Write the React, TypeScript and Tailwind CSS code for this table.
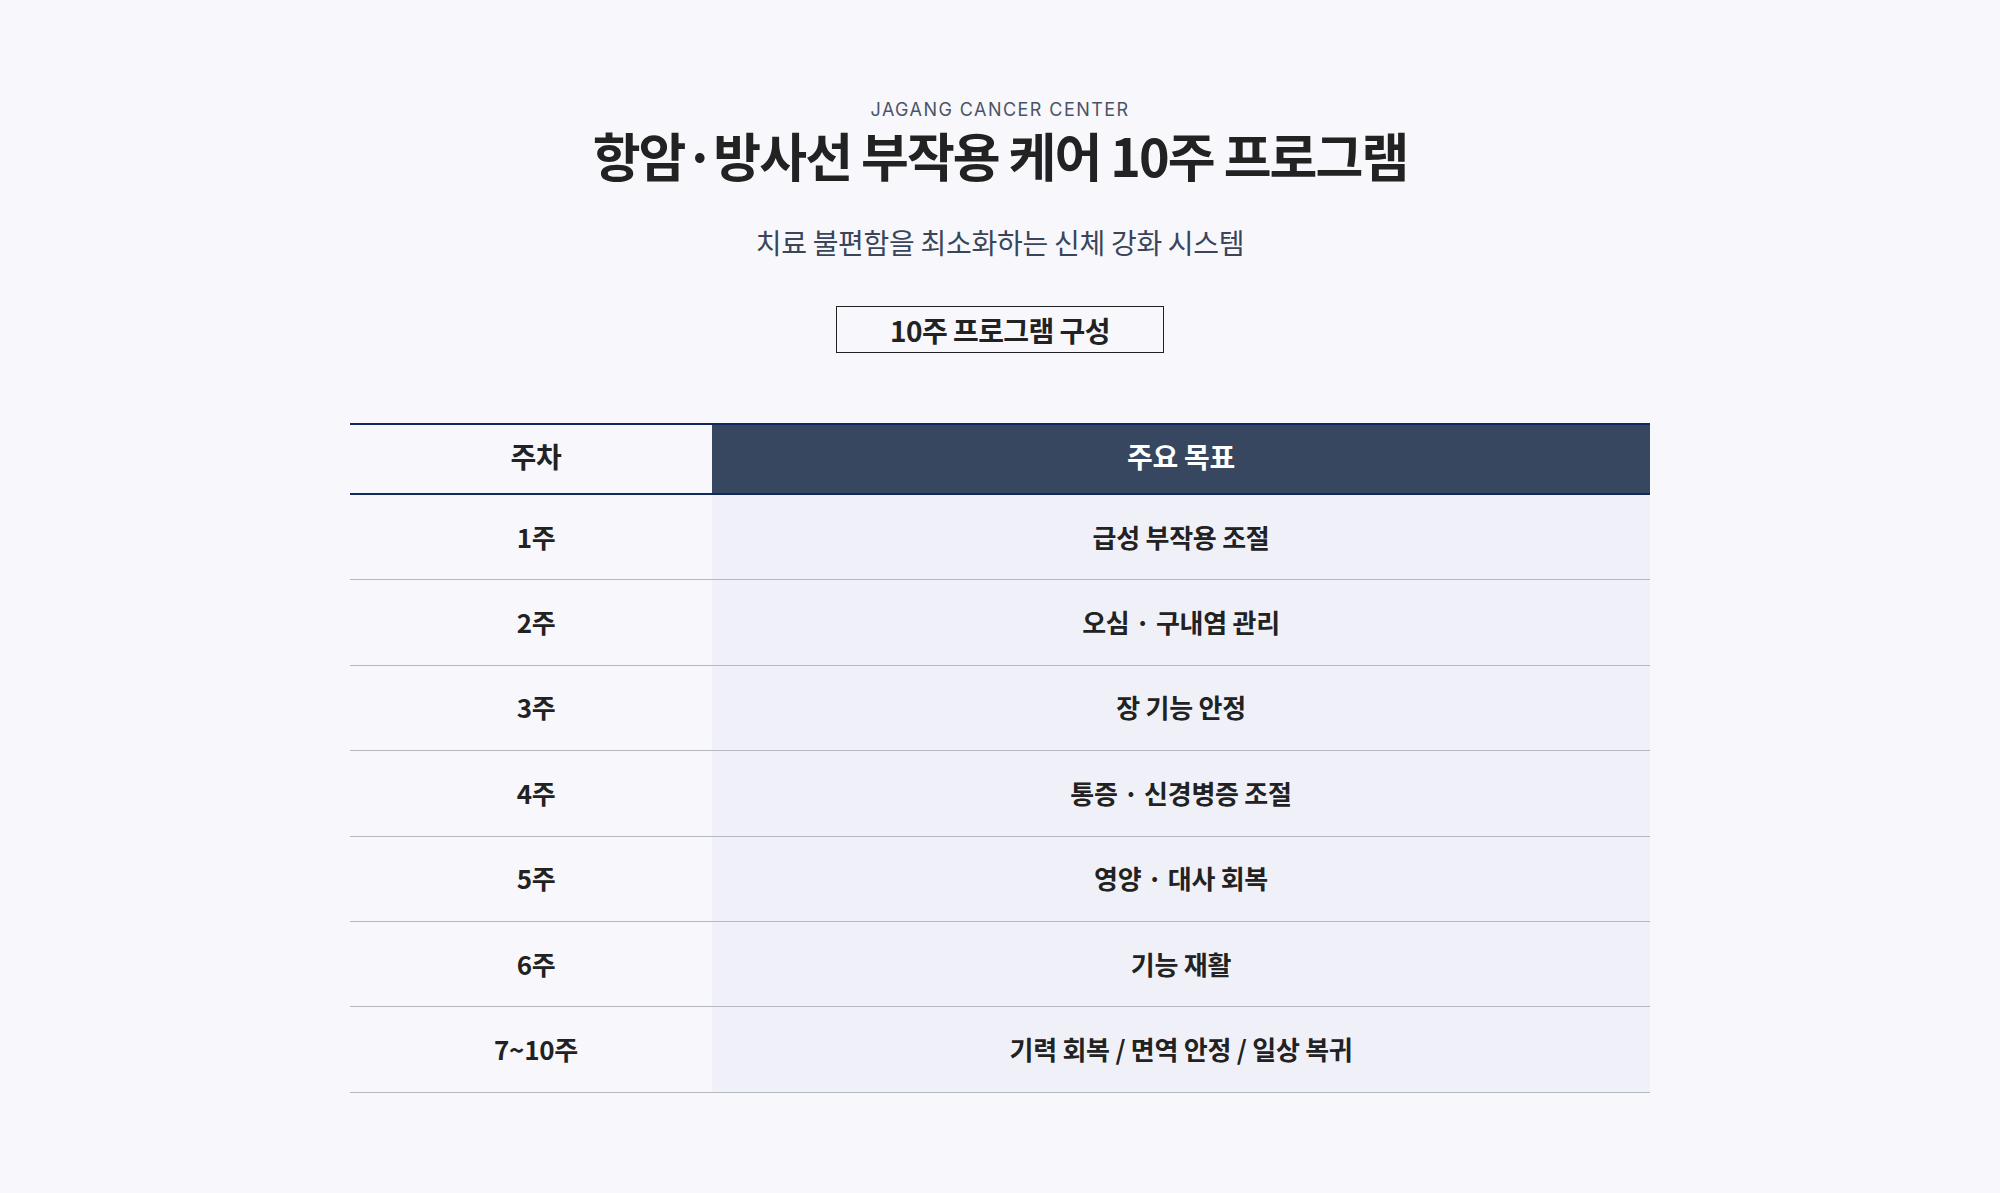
import React from "react";

const rows: { week: string; goal: string }[] = [
  { week: "1주", goal: "급성 부작용 조절" },
  { week: "2주", goal: "오심 · 구내염 관리" },
  { week: "3주", goal: "장 기능 안정" },
  { week: "4주", goal: "통증 · 신경병증 조절" },
  { week: "5주", goal: "영양 · 대사 회복" },
  { week: "6주", goal: "기능 재활" },
  { week: "7~10주", goal: "기력 회복 / 면역 안정 / 일상 복귀" },
];

const font = "font-['Noto_Sans_CJK_KR','Noto_Sans',sans-serif]";

export default function App() {
  return (
    <div className={`min-h-[1193px] w-full bg-[#f8f8fc] text-[#222] ${font}`}>
      <div className="mx-auto flex w-[1300px] flex-col items-center pt-[99px]">
        {/* heading */}
        <p className="text-[18px] leading-[22px] tracking-[0.08em] text-[#4a5366] font-['Inter','Noto_Sans',sans-serif]">
          JAGANG CANCER CENTER
        </p>
        <h1 className="mt-[3px] text-[52px] font-bold leading-[62px] tracking-[-0.037em] text-[#222]">
          항암·방사선 부작용 케어 10주 프로그램
        </h1>
        <p className="mt-[39px] text-[28px] font-normal leading-[34px] tracking-[-0.01em] text-[#3a4559]">
          치료 불편함을 최소화하는 신체 강화 시스템
        </p>

        <div className="mt-[47px] flex h-[47px] w-[328px] items-center justify-center border border-[#222]">
          <span className="text-[28px] font-bold tracking-[-0.02em] text-[#222]">10주 프로그램 구성</span>
        </div>

        {/* table */}
        <div className="mt-[70px] w-full">
          <div className="grid h-[72px] grid-cols-[362px_1fr] border-y-2 border-[#0f2a5c]">
            <div className="flex items-center justify-center pb-[6px] pl-[10px] text-[28px] font-bold tracking-[-0.01em] text-[#222]">
              주차
            </div>
            <div className="flex items-center justify-center bg-[#36475f] pb-[6px] text-[28px] font-bold tracking-[-0.01em] text-white">
              주요 목표
            </div>
          </div>
          {rows.map((r) => (
            <div
              key={r.week}
              className="grid h-[85.4px] grid-cols-[362px_1fr] border-b border-[#b4b8bf]"
            >
              <div className="flex items-center justify-center pb-[2px] pl-[10px] text-[26px] font-bold tracking-[-0.01em] text-[#222]">
                {r.week}
              </div>
              <div className="flex items-center justify-center bg-[#f0f1f8] pb-[2px] text-[26px] font-bold tracking-[-0.01em] text-[#222]">
                {r.goal}
              </div>
            </div>
          ))}
        </div>
      </div>
    </div>
  );
}
